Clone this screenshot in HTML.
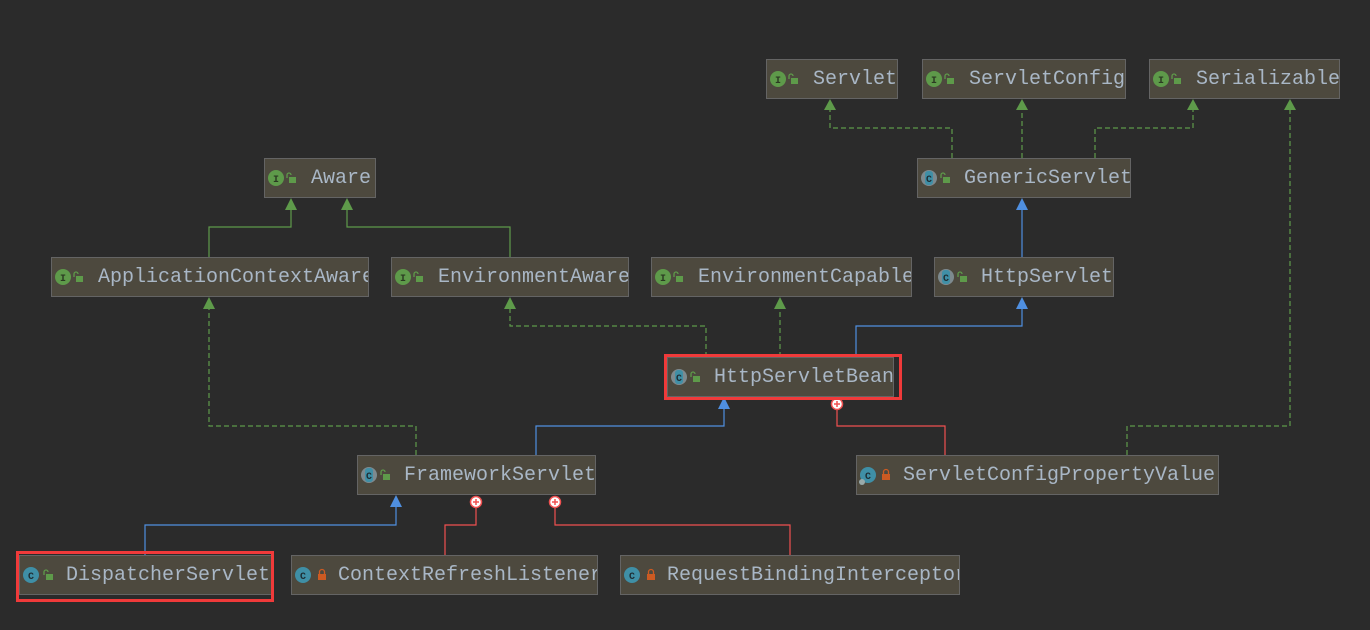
<!DOCTYPE html>
<html><head><meta charset="utf-8"><style>
html,body{margin:0;padding:0;background:#2b2b2b;width:1370px;height:630px;overflow:hidden;position:relative}
.b{position:absolute;height:40px;background:#4d493e;border:1px solid #646464;box-sizing:border-box;overflow:hidden;white-space:nowrap;font-family:"Liberation Mono",monospace;font-size:20px;color:#a9b7c6;line-height:39px;padding-left:46px}
.red{position:absolute;border:3px solid #f03a3a;box-sizing:border-box}
svg{position:absolute;left:0;top:0}
</style></head><body>
<svg width="1370" height="630">
<g fill="none" stroke-width="1.2">
<g stroke="#5e9a4a" stroke-dasharray="5,3">
<path d="M952 158V128H830V108"/>
<path d="M1022 158V108"/>
<path d="M1095 158V128H1193V108"/>
<path d="M1127 455V426H1290V108"/>
<path d="M416 455V426H209V307"/>
<path d="M706 357V326H510V307"/>
<path d="M780 357V307"/>
</g>
<g stroke="#5e9a4a">
<path d="M209 257V227H291V208"/>
<path d="M510 257V227H347V208"/>
</g>
<g stroke="#4f8fe0">
<path d="M1022 257V208"/>
<path d="M856 357V326H1022V307"/>
<path d="M536 455V426H724V407"/>
<path d="M145 555V525H396V505"/>
</g>
<g stroke="#f05050">
<path d="M837 410V426H945V455"/>
<path d="M476 508V525H445V555"/>
<path d="M555 508V525H790V555"/>
</g>
</g>
<g fill="#5e9a4a">
<path d="M824 110L830 99L836 110Z"/><path d="M1016 110L1022 99L1028 110Z"/><path d="M1187 110L1193 99L1199 110Z"/><path d="M1284 110L1290 99L1296 110Z"/>
<path d="M203 309L209 297L215 309Z"/><path d="M504 309L510 297L516 309Z"/><path d="M774 309L780 297L786 309Z"/>
<path d="M285 210L291 198L297 210Z"/><path d="M341 210L347 198L353 210Z"/>
</g>
<g fill="#4f8fe0">
<path d="M1016 210L1022 198L1028 210Z"/><path d="M1016 309L1022 297L1028 309Z"/><path d="M718 409L724 397L730 409Z"/><path d="M390 507L396 495L402 507Z"/>
</g>
<g fill="#fff" stroke="#f05050" stroke-width="1.5">
<circle cx="837" cy="404" r="5.5"/><circle cx="476" cy="502" r="5.5"/><circle cx="555" cy="502" r="5.5"/>
</g>
<g stroke="#f05050" stroke-width="1.5">
<path d="M834 404h6M837 401v6M473 502h6M476 499v6M552 502h6M555 499v6"/>
</g>
</svg>

<div class="b" style="left:766px;top:59px;width:132px">Servlet</div>
<div class="b" style="left:922px;top:59px;width:204px">ServletConfig</div>
<div class="b" style="left:1149px;top:59px;width:191px">Serializable</div>
<div class="b" style="left:264px;top:158px;width:112px">Aware</div>
<div class="b" style="left:917px;top:158px;width:214px">GenericServlet</div>
<div class="b" style="left:51px;top:257px;width:318px">ApplicationContextAware</div>
<div class="b" style="left:391px;top:257px;width:238px">EnvironmentAware</div>
<div class="b" style="left:651px;top:257px;width:261px">EnvironmentCapable</div>
<div class="b" style="left:934px;top:257px;width:180px">HttpServlet</div>
<div class="b" style="left:667px;top:357px;width:227px">HttpServletBean</div>
<div class="b" style="left:357px;top:455px;width:239px">FrameworkServlet</div>
<div class="b" style="left:856px;top:455px;width:363px">ServletConfigPropertyValue</div>
<div class="b" style="left:19px;top:555px;width:253px">DispatcherServlet</div>
<div class="b" style="left:291px;top:555px;width:307px">ContextRefreshListener</div>
<div class="b" style="left:620px;top:555px;width:340px">RequestBindingInterceptor</div>
<div class="red" style="left:664px;top:354px;width:238px;height:46px"></div>
<div class="red" style="left:16px;top:551px;width:258px;height:51px"></div>

<svg width="1370" height="630" font-family="Liberation Mono,monospace" font-weight="bold">
<g fill="#5e9a4a"><circle cx="778" cy="79" r="8"/><circle cx="934" cy="79" r="8"/><circle cx="1161" cy="79" r="8"/><circle cx="276" cy="178" r="8"/><circle cx="63" cy="277" r="8"/><circle cx="403" cy="277" r="8"/><circle cx="663" cy="277" r="8"/></g>
<g fill="#2b3a22" font-size="10" text-anchor="middle"><text x="778" y="83">I</text><text x="934" y="83">I</text><text x="1161" y="83">I</text><text x="276" y="182">I</text><text x="63" y="281">I</text><text x="403" y="281">I</text><text x="663" y="281">I</text></g>
<g fill="#7d8a8f"><circle cx="929" cy="178" r="8"/><circle cx="946" cy="277" r="8"/><circle cx="679" cy="377" r="8"/><circle cx="369" cy="475" r="8"/></g>
<g fill="#3f8fa6"><rect x="925" y="171" width="8" height="14" rx="3"/><rect x="942" y="270" width="8" height="14" rx="3"/><rect x="675" y="370" width="8" height="14" rx="3"/><rect x="365" y="468" width="8" height="14" rx="3"/></g>
<g fill="#3f8fa6"><circle cx="31" cy="575" r="8"/><circle cx="303" cy="575" r="8"/><circle cx="632" cy="575" r="8"/><circle cx="868" cy="475" r="8"/></g>
<circle cx="862" cy="482" r="3" fill="#9aa"/>
<g fill="#1e2d33" font-size="10" text-anchor="middle"><text x="929" y="182">C</text><text x="946" y="281">C</text><text x="679" y="381">C</text><text x="369" y="479">C</text><text x="31" y="579">C</text><text x="303" y="579">C</text><text x="632" y="579">C</text><text x="868" y="479">C</text></g>
<g fill="#5e9a4a">
<rect x="791" y="78" width="7" height="6"/><rect x="947" y="78" width="7" height="6"/><rect x="1174" y="78" width="7" height="6"/><rect x="289" y="177" width="7" height="6"/><rect x="76" y="276" width="7" height="6"/><rect x="416" y="276" width="7" height="6"/><rect x="676" y="276" width="7" height="6"/>
<rect x="943" y="177" width="7" height="6"/><rect x="960" y="276" width="7" height="6"/><rect x="693" y="376" width="7" height="6"/><rect x="383" y="474" width="7" height="6"/><rect x="46" y="574" width="7" height="6"/>
</g>
<g fill="none" stroke="#5e9a4a" stroke-width="1.3">
<path d="M789 79v-3a2 2 0 0 1 4 0M945 79v-3a2 2 0 0 1 4 0M1172 79v-3a2 2 0 0 1 4 0M287 178v-3a2 2 0 0 1 4 0M74 277v-3a2 2 0 0 1 4 0M414 277v-3a2 2 0 0 1 4 0M674 277v-3a2 2 0 0 1 4 0M941 178v-3a2 2 0 0 1 4 0M958 277v-3a2 2 0 0 1 4 0M691 377v-3a2 2 0 0 1 4 0M381 475v-3a2 2 0 0 1 4 0M44 575v-3a2 2 0 0 1 4 0"/>
</g>
<g fill="#cc5a22"><rect x="318" y="574" width="8" height="6"/><rect x="647" y="574" width="8" height="6"/><rect x="882" y="474" width="8" height="6"/></g>
<g fill="none" stroke="#cc5a22" stroke-width="1.3"><path d="M319.5 574v-2a2.5 2.5 0 0 1 5 0v2M648.5 574v-2a2.5 2.5 0 0 1 5 0v2M883.5 474v-2a2.5 2.5 0 0 1 5 0v2"/></g>
</svg>
</body></html>
